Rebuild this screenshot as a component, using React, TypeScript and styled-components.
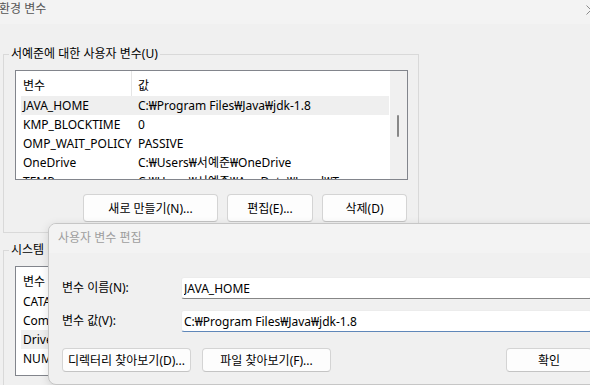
import styled, { createGlobalStyle } from 'styled-components';

const GlobalStyle = createGlobalStyle`
  body {
    margin: 0;
    background: #f0f0f0;
  }
  * {
    box-sizing: border-box;
  }
`;

const FONT = `"Noto Sans", "Noto Sans CJK KR", sans-serif`;

interface EnvRow {
  name: string;
  value: string;
  selected?: boolean;
}

const userVars: EnvRow[] = [
  { name: 'JAVA_HOME', value: 'C:₩Program Files₩Java₩jdk-1.8', selected: true },
  { name: 'KMP_BLOCKTIME', value: '0' },
  { name: 'OMP_WAIT_POLICY', value: 'PASSIVE' },
  { name: 'OneDrive', value: 'C:₩Users₩서예준₩OneDrive' },
  { name: 'TEMP', value: 'C:₩Users₩서예준₩AppData₩Local₩Temp' },
];

const systemVars: EnvRow[] = [
  { name: 'CATALINA_HOME', value: 'C:₩apache-tomcat-9.0' },
  { name: 'ComSpec', value: 'C:₩Windows₩system32₩cmd.exe' },
  { name: 'DriverData', value: 'C:₩Windows₩System32₩Drivers₩DriverData', selected: true },
  { name: 'NUMBER_OF_PROCESSORS', value: '8' },
];

const EnvList = ({ rows, thumbTop }: { rows: EnvRow[]; thumbTop: number }) => (
  <ListView>
    <ListContent>
      <HeaderRow>
        <HeaderCell>변수</HeaderCell>
        <HeaderCell>값</HeaderCell>
      </HeaderRow>
      {rows.map((r) => (
        <Row key={r.name} selected={r.selected}>
          <Cell>{r.name}</Cell>
          <Cell>{r.value}</Cell>
        </Row>
      ))}
    </ListContent>
    <ScrollTrack>
      <ScrollThumb style={{ marginTop: thumbTop }} />
    </ScrollTrack>
  </ListView>
);

const App = () => (
  <Screen>
    <GlobalStyle />
    <TitleBar>
      <TitleText>환경 변수</TitleText>
      <CloseIcon width="10" height="10" viewBox="0 0 10 10">
        <path d="M0.5 0.5 L9.5 9.5 M9.5 0.5 L0.5 9.5" stroke="#8a8a8a" strokeWidth="1" fill="none" />
      </CloseIcon>
    </TitleBar>
    <WindowBody>
      <GroupBox>
        <GroupLegend>서예준에 대한 사용자 변수(U)</GroupLegend>
        <EnvList rows={userVars} thumbTop={44} />
        <ButtonRow>
          <PushButton w={135} h={28}>새로 만들기(N)...</PushButton>
          <PushButton w={86} h={28}>편집(E)...</PushButton>
          <PushButton w={85} h={28}>삭제(D)</PushButton>
        </ButtonRow>
      </GroupBox>
      <GroupBox gap={9}>
        <GroupLegend>시스템 변수(S)</GroupLegend>
        <EnvList rows={systemVars} thumbTop={20} />
      </GroupBox>
    </WindowBody>

    <Dialog>
      <DialogTitle>사용자 변수 편집</DialogTitle>
      <DialogBody>
        <FieldRow>
          <FieldLabel>변수 이름(N):</FieldLabel>
          <TextBox readOnly value="JAVA_HOME" />
        </FieldRow>
        <FieldRow>
          <FieldLabel>변수 값(V):</FieldLabel>
          <TextBox readOnly focused value="C:₩Program Files₩Java₩jdk-1.8" />
        </FieldRow>
        <DialogButtons>
          <PushButton w={129} h={24}>디렉터리 찾아보기(D)...</PushButton>
          <PushButton w={129} h={24}>파일 찾아보기(F)...</PushButton>
          <Spacer />
          <PushButton w={86} h={24}>확인</PushButton>
        </DialogButtons>
      </DialogBody>
    </Dialog>
  </Screen>
);

const Screen = styled.div`
  position: relative;
  width: 590px;
  height: 385px;
  overflow: hidden;
  background: #f0f0f0;
  font-family: ${FONT};
  font-size: 12px;
  color: #000;
`;

const TitleBar = styled.div`
  display: flex;
  justify-content: space-between;
  align-items: center;
  height: 24px;
  padding-bottom: 6px;
  background: #f3f3f3;
`;

const TitleText = styled.span`
  line-height: 16px;
  color: #555;
  margin-left: -1px;
`;

const CloseIcon = styled.svg`
  flex: none;
  margin-right: -6px;
  margin-top: 2px;
`;

const WindowBody = styled.div`
  padding: 22px 0 0 3px;
`;

const GroupBox = styled.fieldset<{ gap?: number }>`
  width: 416px;
  margin: ${({ gap }) => gap ?? 0}px 0 0 0;
  padding: 0 10px 10px 11px;
  min-width: 0;
  border: 1px solid #d9d9d9;
`;

const GroupLegend = styled.legend`
  margin-left: -6px;
  padding: 0 2px;
  line-height: 16px;
  font-size: 12px;
`;

const ListView = styled.div`
  display: flex;
  margin-top: 8px;
  height: 110px;
  border: 1px solid #82858c;
  background: #fff;
  overflow: hidden;
`;

const ListContent = styled.div`
  flex: 1;
  min-width: 0;
  padding: 0 1px 0 5px;
  overflow: hidden;
`;

const HeaderRow = styled.div`
  display: grid;
  grid-template-columns: 111px 1fr;
  height: 25px;
`;

const HeaderCell = styled.div`
  display: flex;
  align-items: center;
  padding-top: 2px;
  padding-left: 2px;
  &:first-child {
    border-right: 1px solid #e5e5e5;
  }
  &:last-child {
    padding-left: 6px;
  }
`;

const Row = styled.div<{ selected?: boolean }>`
  display: grid;
  grid-template-columns: 111px 1fr;
  height: 19px;
  line-height: 19px;
  background: ${({ selected }) => (selected ? '#efefef' : 'transparent')};
  white-space: nowrap;
`;

const Cell = styled.div`
  padding-left: 2px;
  overflow: hidden;
  &:last-child {
    padding-left: 6px;
  }
`;

const ScrollTrack = styled.div`
  flex: none;
  width: 17px;
  background: #f0f0f0;
  padding-left: 7px;
`;

const ScrollThumb = styled.div`
  width: 2px;
  height: 22px;
  border-radius: 1px;
  background: #888;
`;

const ButtonRow = styled.div`
  display: flex;
  justify-content: flex-end;
  gap: 9px;
  margin-top: 14px;
  padding-right: 1px;
`;

const PushButton = styled.button<{ w: number; h: number }>`
  flex: none;
  width: ${({ w }) => w}px;
  height: ${({ h }) => h}px;
  padding: 0;
  font-family: ${FONT};
  font-size: 12px;
  color: #000;
  white-space: nowrap;
  background: #fdfdfd;
  border: 1px solid #d4d4d4;
  border-bottom-color: #c4c4c4;
  border-radius: 4px;
`;

const Dialog = styled.div`
  position: absolute;
  left: 48px;
  top: 223px;
  width: 558px;
  height: 162px;
  border: 1px solid #c6c6c6;
  border-radius: 8px;
  overflow: hidden;
  background: #f0f0f0;
  box-shadow: 0 2px 10px rgba(0, 0, 0, 0.12);
`;

const DialogTitle = styled.div`
  display: flex;
  align-items: center;
  height: 29px;
  padding: 0 0 2px 9px;
  background: #f3f3f3;
  color: #9e9e9e;
  line-height: 16px;
`;

const DialogBody = styled.div`
  display: flex;
  flex-direction: column;
  gap: 11px;
  padding: 24px 13px 0 13px;
`;

const FieldRow = styled.div`
  display: grid;
  grid-template-columns: 119px 1fr;
  align-items: center;
  height: 22px;
`;

const FieldLabel = styled.span`
  line-height: 16px;
`;

const TextBox = styled.input<{ focused?: boolean }>`
  height: 22px;
  width: 100%;
  padding: 0 0 0 2px;
  font-family: ${FONT};
  font-size: 12px;
  color: #000;
  background: #fff;
  border: 1px solid #ececec;
  border-bottom: 1px solid ${({ focused }) => (focused ? '#5f87b9' : '#868686')};
  border-radius: 3px;
  outline: none;
`;

const DialogButtons = styled.div`
  display: flex;
  gap: 11px;
  margin-top: 5px;
`;

const Spacer = styled.div`
  flex: 1;
`;

export default App;
